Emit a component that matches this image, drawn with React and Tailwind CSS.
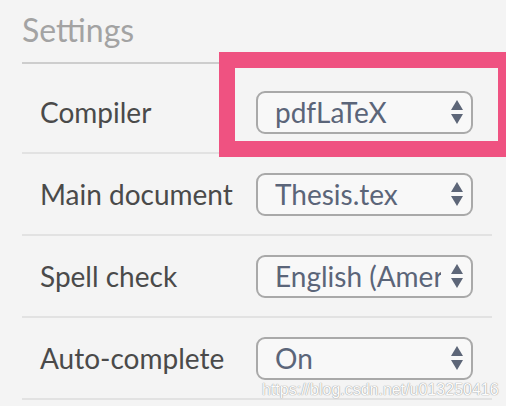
import React from "react";

const rows = [
  { label: "Compiler", value: "pdfLaTeX" },
  { label: "Main document", value: "Thesis.tex" },
  { label: "Spell check", value: "English (American)" },
  { label: "Auto-complete", value: "On" },
];

// up / down arrows of the select box
const Arrows = () => (
  <svg width="12" height="25" viewBox="0 0 12 25" className="shrink-0">
    <polygon points="0,10 6,0 12,10" fill="#5d6678" />
    <polygon points="0,14 12,14 6,24" fill="#5d6678" />
  </svg>
);

const FakeSelect = ({ value }) => (
  <div className="flex items-center w-[217px] h-[43px] rounded-[9px] border-2 border-[#a9a9a9] bg-[#f8f8f8] pl-[17px] pr-[8px]">
    <span className="flex-1 overflow-hidden whitespace-nowrap text-[28px] leading-[36px] text-[#5b6579] mr-[10px]">
      {value}
    </span>
    <Arrows />
  </div>
);

export default function App() {
  return (
    <div className="relative w-[506px] h-[406px] overflow-hidden bg-[#f4f4f4] font-['Lato',sans-serif]">
      <div className="pl-[22px] pr-[14px]">
        {/* Heading */}
        <div className="pt-[11px] pb-[13px] border-b-2 border-[#cdcdcd]">
          <h2 className="text-[32px] leading-[38px] text-[#a3a3a3]">Settings</h2>
        </div>

        {/* Setting rows */}
        <div className="mt-[8px]">
          {rows.map((row) => (
            <div
              key={row.label}
              className="flex items-center h-[82px] border-b-2 border-[#e2e2e2]"
            >
              <span className="w-[234px] pl-[18px] text-[28px] text-[#4a4a4a] whitespace-nowrap">
                {row.label}
              </span>
              <FakeSelect value={row.value} />
            </div>
          ))}
        </div>
      </div>

      {/* highlight annotation */}
      <div className="absolute left-[219px] top-[52px] w-[295px] h-[105px] border-[16px] border-[#ef5281]" />

      {/* watermark */}
      <div className="absolute left-[262px] top-[378px] font-['Liberation_Sans',sans-serif] text-[16px] text-[#fcfcfc] [text-shadow:0_0_1px_#9a9a9a,0_0_1px_#9a9a9a]">
        https://blog.csdn.net/u013250416
      </div>
    </div>
  );
}
